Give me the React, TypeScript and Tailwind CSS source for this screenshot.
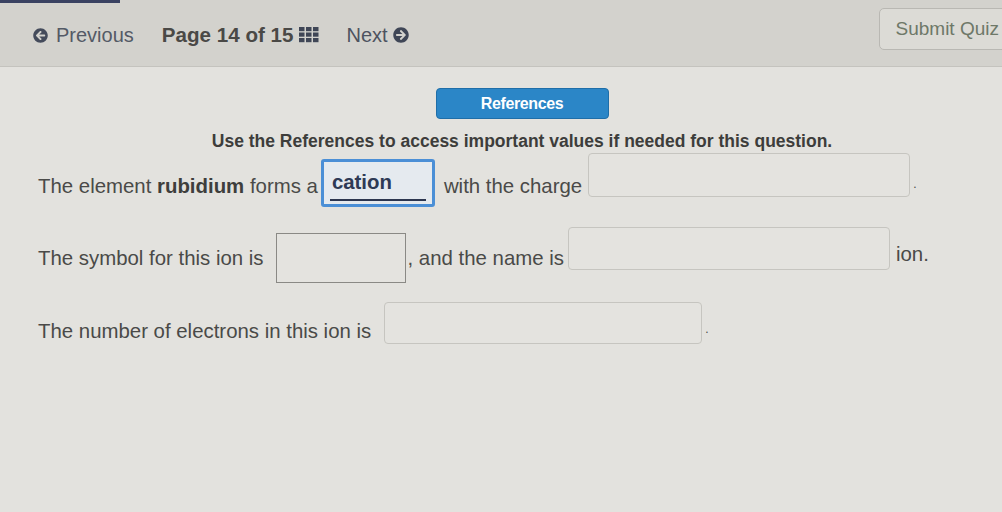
import React from "react";
import { FaArrowCircleLeft, FaArrowCircleRight } from "react-icons/fa";

function GridIcon() {
  const cells = [0, 1, 2].flatMap((r) => [0, 1, 2].map((c) => ({ r, c })));
  return (
    <svg width="20" height="16" viewBox="0 0 20 16" className="text-[#3f4656]">
      {cells.map(({ r, c }) => (
        <rect key={`${r}-${c}`} x={c * 7} y={r * 5.5} width="5.5" height="4.2" fill="currentColor" />
      ))}
    </svg>
  );
}

function Blank({ className }: { className: string }) {
  return <div className={`bg-[#e4e3df] ${className}`} />;
}

export default function App() {
  return (
    <div
      className="w-[1002px] h-[512px] overflow-hidden bg-[#e3e2de] text-[#4a4a48]"
      style={{ fontFamily: '"Liberation Sans", Arial, sans-serif' }}
    >
      {/* top nav */}
      <div className="relative h-[67px] bg-[#d3d2cd] border-b border-[#c4c3be] flex items-center">
        <div className="absolute left-0 top-0 w-[120px] h-[3px] bg-[#3a4261]" />
        <div className="flex items-center pl-[33px] pt-[5px]">
          <button className="flex items-center gap-[8px] text-[20px] text-[#545a66]">
            <FaArrowCircleLeft size={15} className="text-[#444b5b]" />
            Previous
          </button>
          <div className="flex items-center gap-[6px] ml-[28px] text-[20.6px] font-bold text-[#4a4946]">
            Page 14 of 15
            <GridIcon />
          </div>
          <button className="flex items-center gap-[5px] ml-[27px] text-[20px] text-[#4d5360]">
            Next
            <FaArrowCircleRight size={16} className="text-[#3f4656]" />
          </button>
        </div>
        <div className="ml-auto self-start mt-[8px] -mr-[14px] h-[42px] px-[16px] flex items-center rounded-[5px] border border-[#b9b8b3] bg-[#dcdbd6] text-[19px] text-[#6e7868] whitespace-nowrap">
          Submit Quiz
        </div>
      </div>

      {/* content */}
      <div className="flex flex-col items-center">
        <div className="mt-[21px] ml-[42px] w-[173px] h-[31px] rounded-[4px] bg-[#2b86c7] border border-[#1f6ea8] flex items-center justify-center text-[16px] font-bold text-white tracking-tight">
          References
        </div>
        <div className="mt-[12px] ml-[42px] text-[17.5px] font-bold text-[#3d3d3b] leading-[20px]">
          Use the References to access important values if needed for this question.
        </div>
      </div>

      <div className="pl-[38px] text-[20.4px] leading-[22px]">
        <div className="mt-[5px] h-[60px] flex items-center">
          <span>
            The element <b className="text-[#3e3e3c]">rubidium</b> forms a
          </span>
          <div className="ml-[3px] mb-[6px] w-[114px] h-[48px] rounded-[3px] border-[3px] border-[#4b8fd6] bg-[#e5eaef] flex flex-col">
            <div className="flex-1 flex items-center pl-[8px] pt-[3px] font-bold text-[#2e3a55]">cation</div>
            <div className="mx-[6px] mb-[3px] h-[2px] bg-[#2c3650]" />
          </div>
          <span className="ml-[9px]">with the charge</span>
          <Blank className="ml-[6px] mb-[22px] w-[322px] h-[44px] rounded-[4px] border border-[#c6c5c0]" />
          <span className="ml-[3px] mb-[4px] text-[12px]">.</span>
        </div>

        <div className="mt-[12px] h-[60px] flex items-center">
          <span>The symbol for this ion is</span>
          <Blank className="ml-[12px] w-[130px] h-[50px] border border-[#8a8985]" />
          <span className="ml-[2px]">, and the name is</span>
          <Blank className="ml-[4px] mb-[20px] w-[322px] h-[43px] rounded-[4px] border border-[#c6c5c0]" />
          <span className="ml-[6px] mb-[8px]">ion.</span>
        </div>

        <div className="mt-[13px] h-[60px] flex items-center">
          <span>The number of electrons in this ion is</span>
          <Blank className="ml-[13px] mb-[16px] w-[318px] h-[42px] rounded-[4px] border border-[#c6c5c0]" />
          <span className="ml-[3px] mb-[4px] text-[12px]">.</span>
        </div>
      </div>
    </div>
  );
}
